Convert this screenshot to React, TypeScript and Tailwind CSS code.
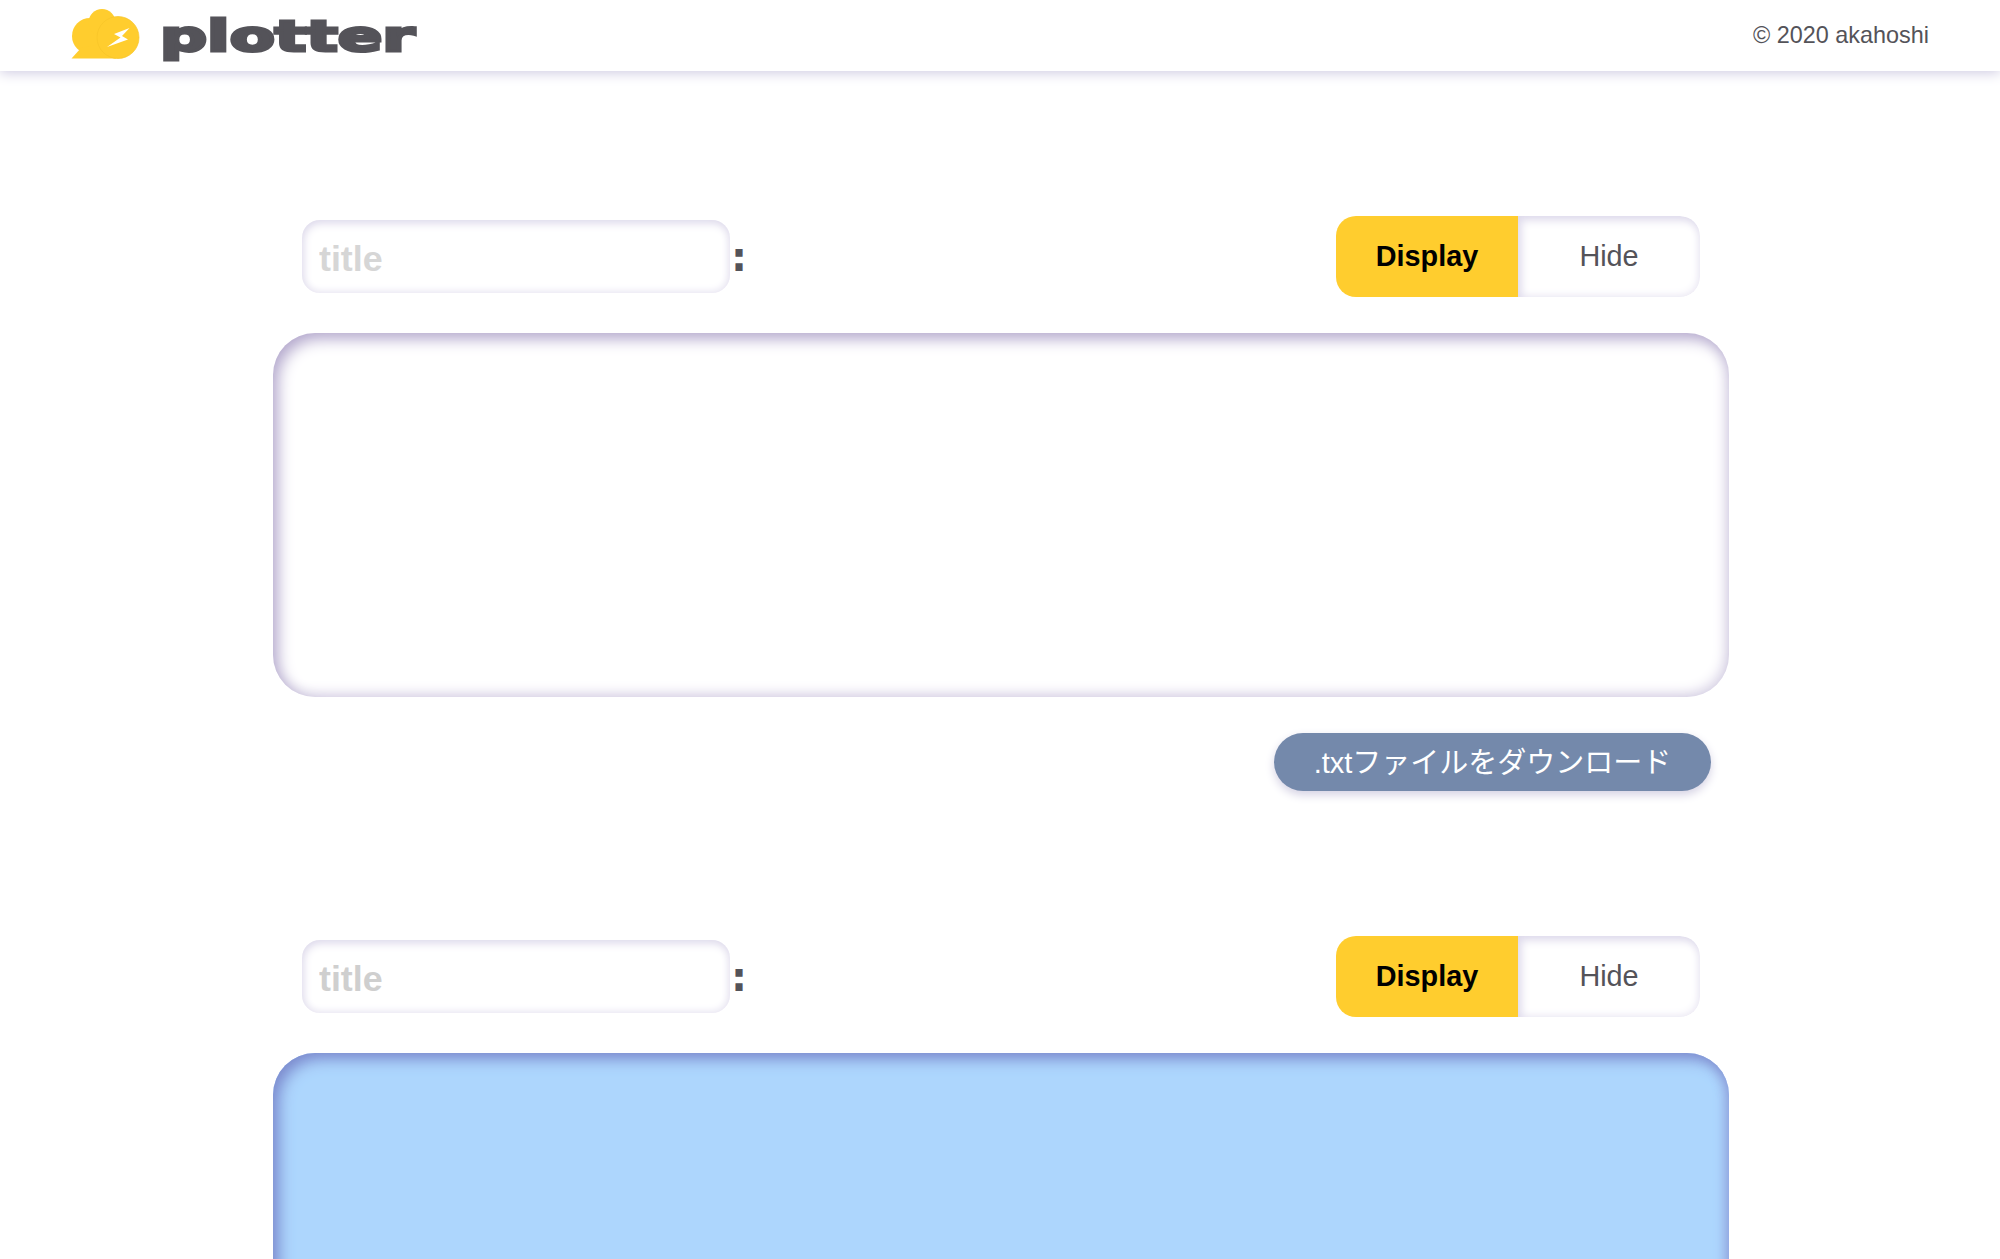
export default function App() {
  const font = "font-['Liberation_Sans','Noto_Sans_CJK_JP',sans-serif]";
  const Section = ({ blue }: { blue?: boolean }) => (
    <section className="flex flex-col">
      <div className="flex items-center justify-between pl-[29px] pr-[29px] h-[81px]">
        <div className="flex items-center">
          <input
            placeholder="title"
            className={`w-[428px] h-[73px] rounded-[18px] pl-[17px] pt-[5px] outline-none bg-white text-[35.8px] font-bold text-[#545359] ${blue ? "placeholder:text-[#cfcfcf]" : "placeholder:text-[#d6d6d6]"} shadow-[inset_1px_3px_10px_#dcd8ea,inset_-1px_-2px_9px_#f1eff7]`}
          />
          <span className="ml-[1px] font-['DejaVu_Sans',sans-serif] text-[40px] font-bold leading-none text-[#545359]">:</span>
        </div>
        <div className="flex w-[364px] h-[81px] rounded-[20px] text-[28.8px] overflow-hidden">
          <div className="w-[182px] flex items-center justify-center bg-[#ffcd2e] font-bold text-black">Display</div>
          <div className="flex-1 flex items-center justify-center rounded-r-[20px] text-[#545359] shadow-[inset_3px_4px_10px_#dcd8ea,inset_-2px_-2px_9px_#f1eff7]">Hide</div>
        </div>
      </div>
      <div
        className={`mt-[36px] h-[364px] rounded-[42px] ${
          blue
            ? "bg-[#add6fd] shadow-[inset_6px_6px_15px_#7c8bce,inset_-4px_-2px_12px_#97abe2]"
            : "bg-white shadow-[inset_5px_6px_15px_#b4a9cd,inset_-4px_-4px_13px_#e2deec]"
        }`}
      />
    </section>
  );
  return (
    <div className={`${font} min-h-[1259px] h-[1259px] overflow-hidden bg-white text-[#545359]`}>
      <header className="relative h-[71px] flex items-center justify-between pl-[70px] pr-[71px] bg-white shadow-[0_2px_12px_#cfcbe2]">
        <div className="flex items-center">
          <svg width="72" height="60" viewBox="0 0 72 60" className="shrink-0">
            <circle cx="20" cy="30" r="18" fill="#ffcd2e" />
            <circle cx="32" cy="16.5" r="13.5" fill="#ffcd2e" />
            <path d="M1.5 52.5 L11 42 L40 36 L46 52.5 Z" fill="#ffcd2e" />
            <circle cx="48" cy="31.5" r="21" fill="#ffcd2e" stroke="#f6c428" strokeWidth="0.7" />
            <path d="M59.5 22 L44 28 L50.5 31.5 L37 41 L58 33.5 L52 30 Z" fill="#fff" />
          </svg>
          <span className="ml-[18px] origin-left scale-x-[1.53] font-['DejaVu_Sans',sans-serif] font-bold text-[43px] leading-none text-[#545359] [-webkit-text-stroke:3px_#545359] mt-[2px]">plotter</span>
        </div>
        <span className="text-[23.4px]">© 2020 akahoshi</span>
      </header>
      <main className="w-[1456px] ml-[273px] pt-[145px]">
        <Section />
        <div className="flex justify-end pr-[18px] mt-[36px]">
          <button className="h-[58px] w-[437px] rounded-full bg-[#7489ab] text-white text-[29px] pt-[4px] shadow-[0_4px_10px_#d5d2e4]">.txtファイルをダウンロード</button>
        </div>
        <div className="mt-[145px]">
          <Section blue />
        </div>
      </main>
    </div>
  );
}
